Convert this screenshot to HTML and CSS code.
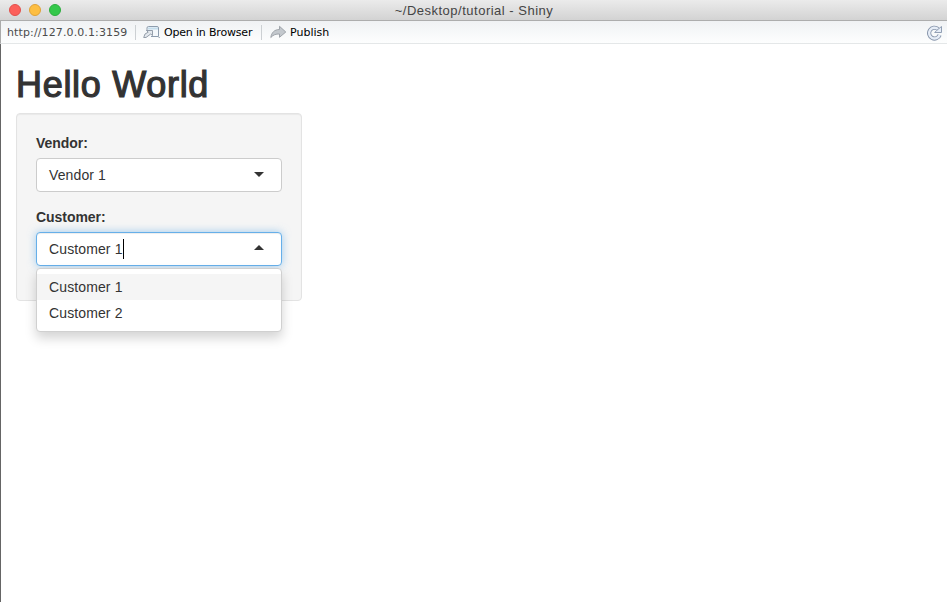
FILE: index.html
```html
<!DOCTYPE html>
<html lang="en">
<head>
<meta charset="utf-8">
<title>~/Desktop/tutorial - Shiny</title>
<link rel="stylesheet" href="styles.css">
</head>
<body>
<div class="window">
  <header class="titlebar">
    <div class="lights"><span class="light red"></span><span class="light yellow"></span><span class="light green"></span></div>
    <span class="title">~/Desktop/tutorial - Shiny</span>
  </header>
  <nav class="toolbar">
    <span class="url">http://127.0.0.1:3159</span>
    <span class="separator"></span>
    <svg class="icon-open" width="18" height="14" viewBox="0 0 18 14">
      <path d="M4 6V3Q4 1.500 5.500 1.500H14Q15.500 1.500 15.500 3V11.500H8" fill="#f4f8fb" stroke="#8d9cad"/>
      <path d="M5 2.500H15V4.500H5Z" fill="#c4ddec"/>
      <path d="M15.500 12.500H17" stroke="#a9b2bc"/>
      <path d="M3.500 5.500H9.500V10.500L7.700 9L3 12.500H.7L2 9L5.200 7.200Z" fill="#e3e8ed" stroke="#8a94a1" stroke-width=".9" stroke-linejoin="round"/>
    </svg>
    <span class="action open">Open in Browser</span>
    <span class="separator second"></span>
    <svg class="icon-publish" width="17" height="14" viewBox="0 0 17 14">
      <path d="M.8 12.500C1.500 7.500 4.500 4.500 9.500 4.500V1.300L15.800 7L9.500 12.300V9C6 8.800 3.200 9.800 .8 12.500Z" fill="#c3c8cd" stroke="#979da4" stroke-width=".9" stroke-linejoin="round"/>
    </svg>
    <span class="action publish">Publish</span>
    <svg class="icon-reload" width="17" height="16" viewBox="0 0 17 16">
      <path d="M12 4A5.400 5.400 0 1 0 13.600 10" fill="none" stroke="#8795ab" stroke-width="4.200"/>
      <path d="M12 4A5.400 5.400 0 1 0 13.600 10" fill="none" stroke="#e6edf7" stroke-width="2.400"/>
      <path d="M15.500 1.500V7.500H8.700L11 5.200Z" fill="#e6edf7" stroke="#8795ab" stroke-width=".9"/>
    </svg>
  </nav>
  <main class="page">
    <h2>Hello World</h2>
    <form class="well">
      <div class="group">
        <label>Vendor:</label>
        <div class="select"><span>Vendor 1</span><i class="caret"></i></div>
      </div>
      <div class="group">
        <label>Customer:</label>
        <div class="select focus"><span class="typing">Customer 1</span><i class="caret up"></i>
          <div class="dropdown">
            <div class="option active">Customer 1</div>
            <div class="option">Customer 2</div>
          </div>
        </div>
      </div>
    </form>
  </main>
</div>
</body>
</html>
```
FILE: styles.css
```css
* { box-sizing: border-box; }
body {
  margin: 0;
  background: #fff;
  color: #333;
  font: 14px/20px "Liberation Sans", Arial, sans-serif;
}
.window { height: 602px; overflow: hidden; display: flex; flex-direction: column; }
.titlebar {
  position: relative;
  height: 21px;
  flex: none;
  display: flex;
  align-items: center;
  justify-content: center;
  background: linear-gradient(#ebebeb, #d3d3d3);
  border-bottom: 1px solid #adadad;
}
.lights { position: absolute; left: 9px; top: 4px; display: flex; gap: 8px; }
.light { width: 12px; height: 12px; border-radius: 50%; border: 1px solid; }
.red { background: #fc605b; border-color: #e2504c; }
.yellow { background: #fdbe41; border-color: #e0a236; }
.green { background: #34c84a; border-color: #2cae3d; }
.title { font-size: 13px; letter-spacing: 0.5px; color: #444; padding: 2px 0 0 1px; }
.toolbar {
  height: 23px;
  flex: none;
  display: flex;
  align-items: center;
  padding: 0 4px 0 6px;
  background: linear-gradient(#f0f2f4, #fdfefe);
  border-bottom: 1px solid #e4e7e8;
  border-left: 1px solid #aaa;
  font: 11px/22px "DejaVu Sans", sans-serif;
  color: #000;
  white-space: nowrap;
}
.url { width: 128px; color: #4c4c4c; letter-spacing: 0.12px; padding-top: 1px; }
.action { padding-top: 1px; }
.separator { width: 1px; height: 15px; background: #ccd0d3; }
.icon-open { margin-left: 7px; flex: none; }
.open { margin-left: 3px; width: 97px; letter-spacing: -0.18px; }
.icon-publish { margin-left: 8px; flex: none; }
.publish { margin-left: 3px; }
.icon-reload { margin-left: auto; margin-top: 2px; }
.page { flex: 1; border-left: 1px solid #656565; padding: 21px 15px; }
h2 {
  margin: 0 0 8px;
  font-size: 36px;
  line-height: 40px;
  font-weight: 400;
  letter-spacing: 0.7px;
  -webkit-text-stroke: 1.2px #333;
}
.well {
  width: 286px;
  height: 188px;
  padding: 19px;
  background: #f5f5f5;
  border: 1px solid #e3e3e3;
  border-radius: 4px;
  box-shadow: inset 0 1px 1px rgba(0, 0, 0, .05);
}
.group { margin-bottom: 15px; }
label { display: block; font-weight: 700; margin-bottom: 5px; letter-spacing: -0.05px; }
.select {
  position: relative;
  height: 34px;
  display: flex;
  align-items: center;
  justify-content: space-between;
  padding: 0 17px 0 12px;
  background: #fff;
  border: 1px solid #ccc;
  border-radius: 4px;
  letter-spacing: 0.12px;
}
.focus {
  border-color: #66afe9;
  box-shadow: inset 0 1px 1px rgba(0, 0, 0, .075), 0 0 8px rgba(102, 175, 233, .6);
}
.typing { border-right: 1px solid #000; }
.caret { border: 5px solid transparent; border-top-color: #333; border-bottom: 0; margin-bottom: 1px; }
.up { border-top: 0; border-bottom: 5px solid #333; margin-bottom: 3px; }
.dropdown {
  position: absolute;
  left: -1px;
  right: -1px;
  top: 35px;
  height: 64px;
  padding: 5px 0;
  background: #fff;
  border: 1px solid #d0d0d0;
  border-radius: 4px;
  box-shadow: 0 6px 12px rgba(0, 0, 0, .175);
}
.option { padding: 3px 12px; height: 26px; }
.active { background: #f5f5f5; }
```
